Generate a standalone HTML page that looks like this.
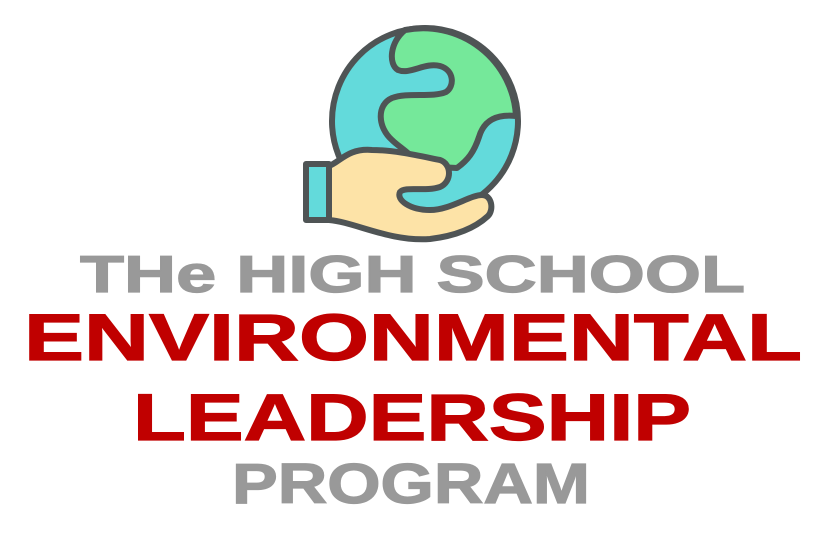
<!DOCTYPE html>
<html><head><meta charset="utf-8"><style>
html,body{margin:0;padding:0;background:#fff;width:818px;height:537px;overflow:hidden}
</style></head><body>
<svg width="818" height="537" viewBox="0 0 818 537" xmlns="http://www.w3.org/2000/svg">
<g stroke="#4f5455" stroke-width="6" stroke-linejoin="round" stroke-linecap="round">
<circle cx="425" cy="121" r="93" fill="#63dadb"/>
<path d="M405,30 A93,93 0 0 1 516,116 C497,114 484,120 479,137 C474,152 468,160 457,168 L418,166 C414,155 400,148 392,140 C378,128 376,105 392,98 C408,92 432,98 446,92 C455,86 454,70 440,66 C425,62 410,75 398,70 C388,64 390,42 405,30 Z" fill="#75e89a"/>
<path d="M329,166 C340,162 348,148 372,150 C395,150 420,156 440,160 C452,164 452,182 440,187 C425,192 405,186 400,192 C396,200 410,210 430,210 C450,210 470,195 482,195 C492,195 494,210 488,216 C475,228 455,236 430,239 C390,242 355,222 329,220 Z" fill="#fde3a7"/>
<rect x="306" y="164" width="23" height="56" fill="#63dadb"/>
</g>
<g font-family="Liberation Sans, sans-serif" font-weight="bold" text-anchor="start" stroke-width="1.2">
<text x="80" y="292" font-size="52" fill="#999999" stroke="#999999" textLength="665" lengthAdjust="spacingAndGlyphs">THe HIGH SCHOOL</text>
<text x="24" y="360" font-size="66" fill="#c00000" stroke="#c00000" textLength="778" lengthAdjust="spacingAndGlyphs">ENVIRONMENTAL</text>
<text x="133" y="440" font-size="66" fill="#c00000" stroke="#c00000" textLength="558" lengthAdjust="spacingAndGlyphs">LEADERSHIP</text>
<text x="232" y="503" font-size="57" fill="#999999" stroke="#999999" textLength="358" lengthAdjust="spacingAndGlyphs">PROGRAM</text>
</g>
</svg>
</body></html>
